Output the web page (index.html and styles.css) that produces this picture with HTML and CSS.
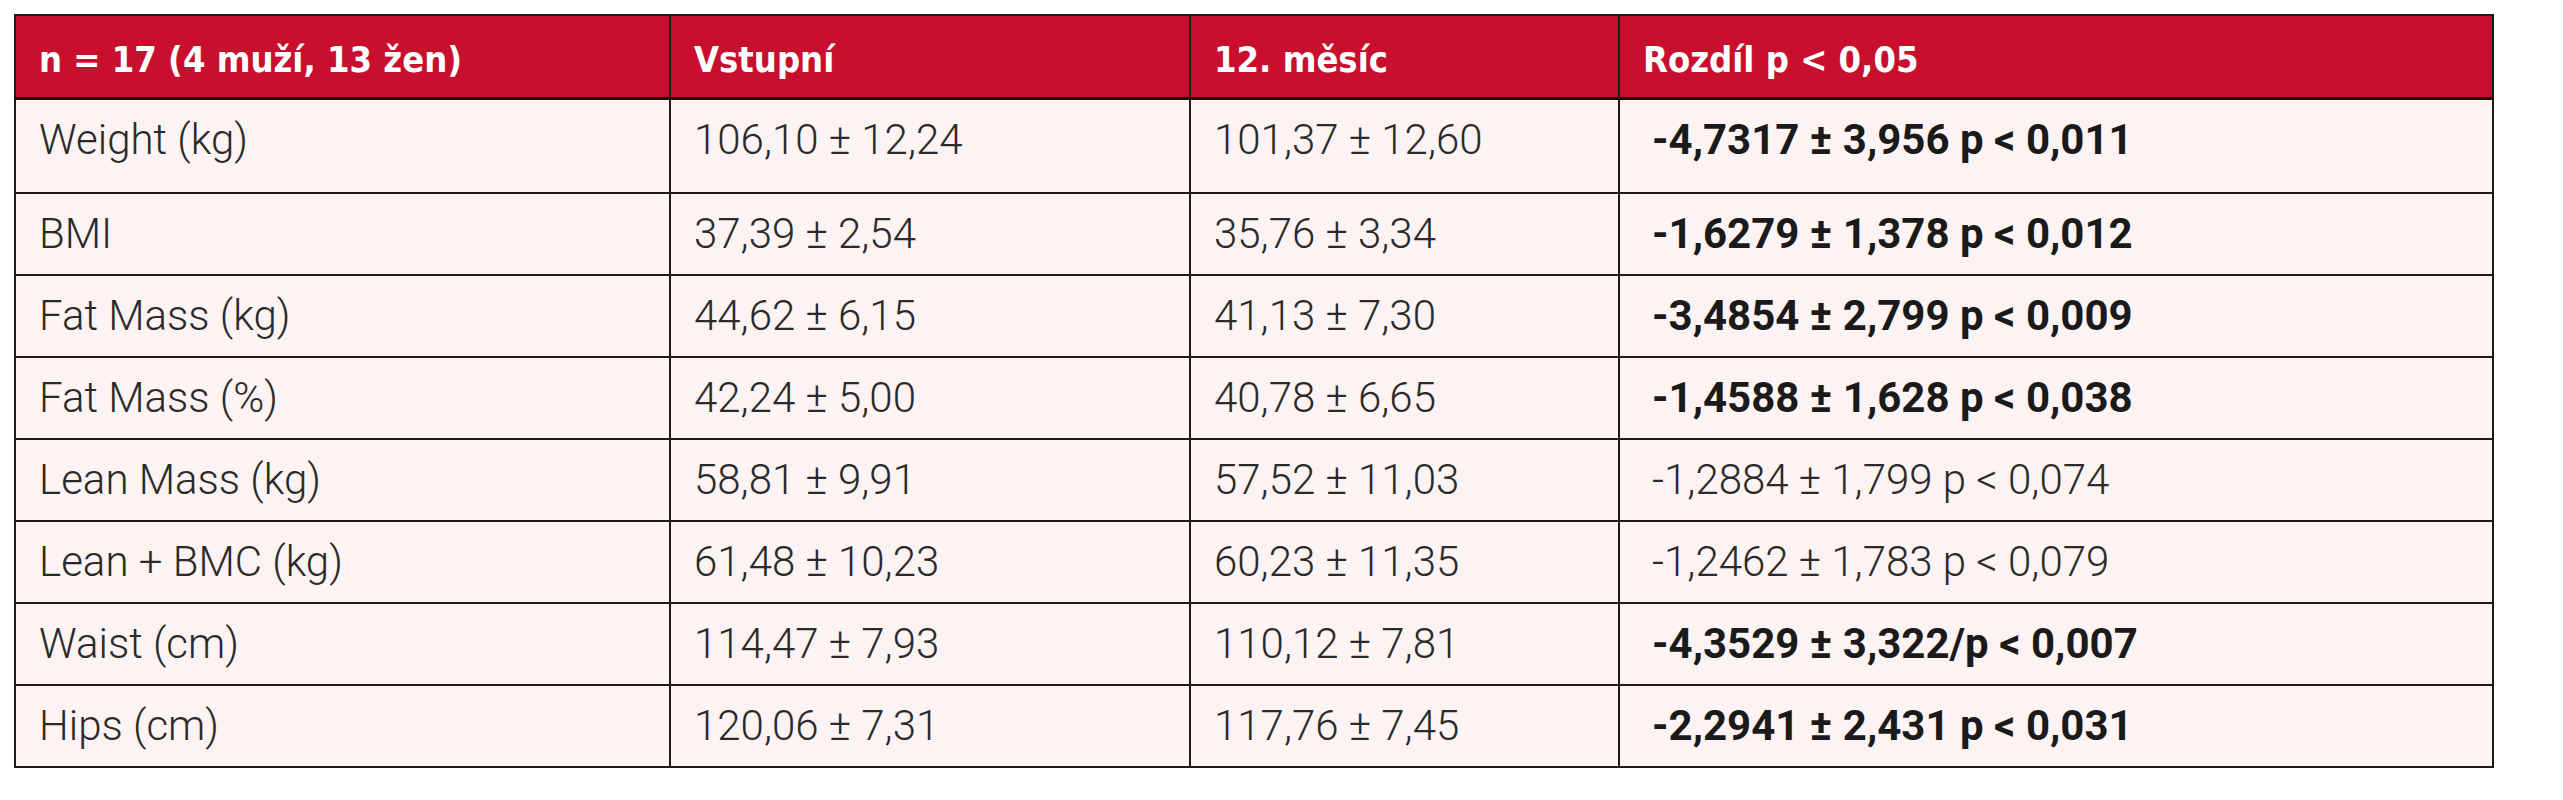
FILE: index.html
```html
<!DOCTYPE html>
<html lang="cs">
<head>
<meta charset="utf-8">
<title>Tabulka</title>
<link rel="stylesheet" href="styles.css">
</head>
<body>
<table class="data">
  <colgroup>
    <col class="c1"><col class="c2"><col class="c3"><col class="c4">
  </colgroup>
  <thead>
    <tr>
      <th>n = 17 (4 muží, 13 žen)</th>
      <th>Vstupní</th>
      <th>12. měsíc</th>
      <th>Rozdíl p &lt; 0,05</th>
    </tr>
  </thead>
  <tbody>
    <tr class="first">
      <td>Weight (kg)</td><td>106,10 ± 12,24</td><td>101,37 ± 12,60</td><td class="diff sig">-4,7317 ± 3,956 p &lt; 0,011</td>
    </tr>
    <tr>
      <td>BMI</td><td>37,39 ± 2,54</td><td>35,76 ± 3,34</td><td class="diff sig">-1,6279 ± 1,378 p &lt; 0,012</td>
    </tr>
    <tr>
      <td>Fat Mass (kg)</td><td>44,62 ± 6,15</td><td>41,13 ± 7,30</td><td class="diff sig">-3,4854 ± 2,799 p &lt; 0,009</td>
    </tr>
    <tr>
      <td>Fat Mass (%)</td><td>42,24 ± 5,00</td><td>40,78 ± 6,65</td><td class="diff sig">-1,4588 ± 1,628 p &lt; 0,038</td>
    </tr>
    <tr>
      <td>Lean Mass (kg)</td><td>58,81 ± 9,91</td><td>57,52 ± 11,03</td><td class="diff">-1,2884 ± 1,799 p &lt; 0,074</td>
    </tr>
    <tr>
      <td>Lean + BMC (kg)</td><td>61,48 ± 10,23</td><td>60,23 ± 11,35</td><td class="diff">-1,2462 ± 1,783 p &lt; 0,079</td>
    </tr>
    <tr>
      <td>Waist (cm)</td><td>114,47 ± 7,93</td><td>110,12 ± 7,81</td><td class="diff sig">-4,3529 ± 3,322/p &lt; 0,007</td>
    </tr>
    <tr>
      <td>Hips (cm)</td><td>120,06 ± 7,31</td><td>117,76 ± 7,45</td><td class="diff sig">-2,2941 ± 2,431 p &lt; 0,031</td>
    </tr>
  </tbody>
</table>
</body>
</html>
```

FILE: styles.css
```css
html, body {
  margin: 0;
  padding: 0;
  background: #ffffff;
}

body {
  padding: 14px 0 0 14px;
}

.data {
  border-collapse: collapse;
  table-layout: fixed;
  width: 2478px;
  background: #fdf3f2;
  color: #2a2a2a;
  font-family: Roboto, "Liberation Sans", sans-serif;
  font-weight: 300;
  font-size: 42px;
}

.c1 { width: 655px; }
.c2 { width: 520px; }
.c3 { width: 429px; }
.c4 { width: 874px; }

.data th,
.data td {
  box-sizing: border-box;
  border: 2px solid #1f1b1b;
  text-align: left;
  vertical-align: middle;
  white-space: nowrap;
  line-height: 1;
}

.data th {
  background: #c8102e;
  color: #ffffff;
  font-family: "DejaVu Sans Condensed", "DejaVu Sans", sans-serif;
  font-stretch: condensed;
  font-weight: 700;
  font-size: 36px;
  height: 83px;
  padding: 8px 22px 0 23px;
  border-bottom: 3px solid #2a0606;
}

.data td {
  height: 82px;
  padding: 0 22px 0 23px;
}

.data tr.first td {
  height: 95px;
  padding-bottom: 12px;
}

.data td.diff {
  padding-left: 32px;
}

.data td.sig {
  font-weight: 700;
  color: #1a1a1a;
}
```
